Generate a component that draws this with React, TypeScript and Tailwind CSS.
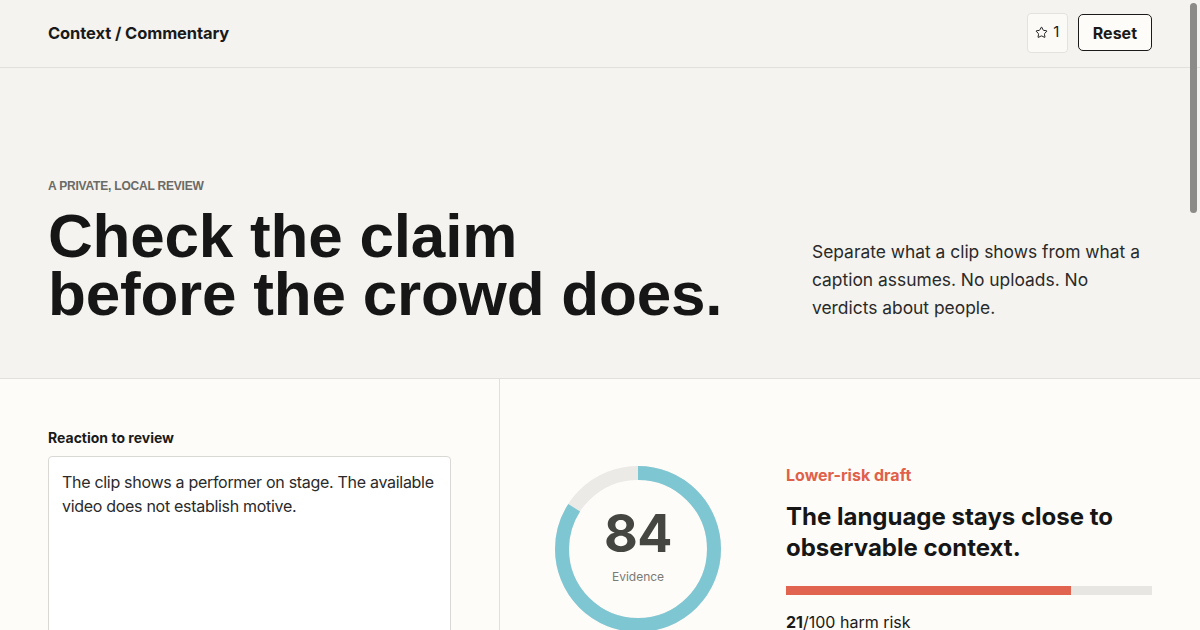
import React from 'react'
import { Star } from 'lucide-react'

const sans = "font-['Inter','Liberation_Sans',sans-serif]"
const grotesk = "font-['Liberation_Sans','Arial',sans-serif]"

const Donut = ({ value, label }: { value: number; label: string }) => {
  const r = 76
  const c = 2 * Math.PI * r
  return (
    <div className="relative w-[166px] h-[166px] shrink-0">
      <svg width="166" height="166" viewBox="0 0 166 166" className="-rotate-90">
        <circle cx="83" cy="83" r={r} fill="none" stroke="#ebeae6" strokeWidth="14" />
        <circle
          cx="83"
          cy="83"
          r={r}
          fill="none"
          stroke="#7fc6d3"
          strokeWidth="14"
          strokeDasharray={`${(c * value) / 100} ${c}`}
        />
      </svg>
      <div className="absolute inset-0 flex flex-col items-center justify-center">
        <span className="text-[52px] leading-none font-bold text-[#454542] tracking-[-0.5px] mt-[-4px]">{value}</span>
        <span className="text-[12px] text-[#7a7a77] mt-[8px]">{label}</span>
      </div>
    </div>
  )
}

export default function App() {
  return (
    <div className={`${sans} relative h-[630px] w-[1200px] overflow-hidden bg-[#fdfcf8] text-[#1a1a1a]`}>
      {/* top bar */}
      <header className="h-[68px] flex items-center justify-between px-12 bg-[#f4f3ef] border-b border-[#e2e0db]">
        <span className="text-[16.5px] font-bold tracking-[-0.1px]">Context / Commentary</span>
        <div className="flex items-center gap-[10px] mt-[-2px]">
          <button className="h-[40px] w-[41px] flex items-center justify-center gap-[5px] rounded-[4px] border border-[#e4e2dd] bg-[#fbfaf7] text-[15px]">
            <Star size={13} strokeWidth={1.8} />
            <span>1</span>
          </button>
          <button className="h-[37px] px-[14px] rounded-[5px] border border-[#1a1a1a] bg-[#fdfcf8] text-[16px] font-bold">
            Reset
          </button>
        </div>
      </header>

      {/* hero */}
      <section className="h-[311px] bg-[#f4f3ef] border-b border-[#e2e0db] pl-12 pr-[50px] flex items-end justify-between pb-[55px]">
        <div>
          <p className={`${grotesk} text-[12px] font-bold uppercase text-[#6b6a66] tracking-[-0.2px]`}>A private, local review</p>
          <h1 className={`${grotesk} mt-[12px] text-[62px] leading-[58px] font-bold tracking-[-0.2px] text-[#161616]`}>
            Check the claim
            <br />
            before the crowd does.
          </h1>
        </div>
        <p className="w-[338px] text-[17.4px] leading-[28px] text-[#2a2a2a] mb-[1px]">
          Separate what a clip shows from what a caption assumes. No uploads. No verdicts about people.
        </p>
      </section>

      {/* review area */}
      <section className="grid grid-cols-[500px_1fr]">
        <div className="border-r border-[#e2e0db] pl-12 pr-12 pt-[48px] h-[300px]">
          <label className="block text-[14px] font-bold mb-[8px]">Reaction to review</label>
          <div className="h-[220px] rounded-[4px] border border-[#d9d8d4] bg-white px-[13px] py-[13px] text-[16px] leading-[24px] tracking-[-0.3px] text-[#2a2a2a]">
            The clip shows a performer on stage. The available video does not establish motive.
          </div>
        </div>

        <div className="pl-[55px] pr-12 pt-[87px] flex items-start gap-[65px]">
          <Donut value={84} label="Evidence" />
          <div className="flex-1">
            <p className="text-[16px] font-bold text-[#e0604a] mt-[-3px]">Lower-risk draft</p>
            <h2 className="mt-[14px] text-[24px] leading-[31px] font-bold tracking-[0px] text-[#161616]">
              The language stays close to observable context.
            </h2>
            <div className="mt-[23px] h-[9px] bg-[#e7e6e2]">
              <div className="h-full bg-[#e0644f]" style={{ width: '78%' }} />
            </div>
            <p className="mt-[19px] text-[16px] leading-[16px]">
              <span className="font-bold">21</span>/100 harm risk
            </p>
          </div>
        </div>
      </section>

      {/* overlay scroll thumb */}
      <div className="absolute right-[3px] top-[3px] h-[210px] w-[7px] rounded-full bg-[#8c8b88]" />
    </div>
  )
}
